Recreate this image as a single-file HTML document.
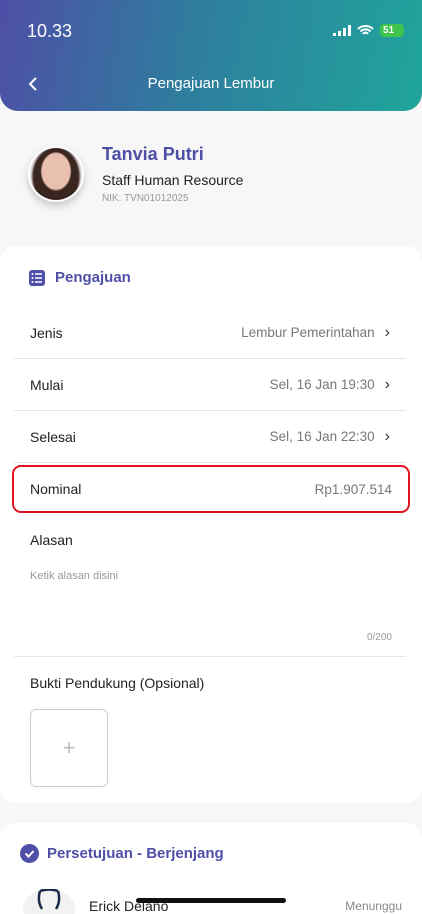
<!DOCTYPE html>
<html><head><meta charset="utf-8"><style>
*{margin:0;padding:0;box-sizing:border-box}
html,body{width:422px;height:914px;overflow:hidden}
body{background:#f7f7f7;font-family:"Liberation Sans",sans-serif;position:relative;color:#222}
.hdr{position:absolute;left:0;top:0;width:422px;height:111px;background:linear-gradient(100deg,#4e4fa6 0%,#2f7d9e 45%,#1fa59b 100%);border-radius:0 0 18px 18px}
.time{position:absolute;left:27px;top:21px;color:#fff;font-size:18px}
.title{position:absolute;left:0;width:422px;top:75px;text-align:center;color:#fff;font-size:15px}
.back{position:absolute;left:27px;top:76px}
.av{position:absolute;left:28px;top:146px;width:56px;height:56px;border-radius:50%;background:#ddd;border:2px solid #fff;box-shadow:0 4px 8px rgba(0,0,0,.2);overflow:hidden}
.name{position:absolute;left:102px;top:144px;font-size:18px;font-weight:bold;color:#4e4fa6}
.role{position:absolute;left:102px;top:172px;font-size:14px;color:#222}
.nik{position:absolute;left:102px;top:193px;font-size:10px;color:#999}
.card{position:absolute;left:0;width:422px;background:#fff;border-radius:16px}
.sec{position:absolute;font-size:15px;font-weight:bold;color:#4e4fa6}
.row{position:absolute;left:14px;width:392px;height:52px;border-bottom:1px solid #e5e5e5;font-size:14px;display:flex;align-items:center;padding:0 16px}
.row .v{margin-left:auto;color:#777;font-size:13.5px}
.ch{margin-left:10px;color:#333;font-size:16px}
</style></head><body>
<div class="hdr">
<div class="time">10.33</div>
<div style="position:absolute;right:18px;top:24px;display:flex;gap:6px;align-items:center">
<svg width="18" height="12"><g fill="#fff"><rect x="0" y="8" width="3" height="3"/><rect x="5" y="6" width="3" height="5"/><rect x="10" y="3" width="3" height="8"/><rect x="15" y="0" width="3" height="11"/></g></svg>
<svg width="17" height="12" viewBox="0 0 17 12"><path d="M1 4a11 11 0 0 1 15 0M3.5 6.5a7 7 0 0 1 10 0M6 9a3 3 0 0 1 5 0" stroke="#fff" stroke-width="2" fill="none"/></svg>
<div style="width:24px;height:13px;border-radius:4px;background:#3ec34c;color:#fff;font-size:10px;font-weight:bold;padding-left:3px;line-height:13px">51</div>
</div>
<svg class="back" width="12" height="16"><path d="M9 2L3 8l6 6" stroke="#fff" stroke-width="2" fill="none"/></svg>
<div class="title">Pengajuan Lembur</div>
</div>
<div class="av"><div style="width:100%;height:100%;background:radial-gradient(ellipse 30% 38% at 50% 45%,#e9bfae 0 90%,transparent 100%),radial-gradient(ellipse 48% 60% at 50% 55%,#3a2620 0 90%,transparent 100%),#dcdcdc"></div></div>
<div class="name">Tanvia Putri</div>
<div class="role">Staff Human Resource</div>
<div class="nik">NIK: TVN01012025</div>

<div class="card" style="top:246px;height:557px">
<svg style="position:absolute;left:29px;top:24px" width="16" height="16"><rect x="0" y="0" width="16" height="16" rx="3" fill="#4e4fa6"/><g stroke="#fff" stroke-width="1.4"><path d="M6 4h7M6 8h7M6 12h7"/></g><g fill="#fff"><circle cx="3.5" cy="4" r="1"/><circle cx="3.5" cy="8" r="1"/><circle cx="3.5" cy="12" r="1"/></g></svg>
<div class="sec" style="left:55px;top:23px">Pengajuan</div>
</div>
<div class="row" style="top:307px">Jenis<span class="v">Lembur Pemerintahan</span><span class="ch">›</span></div>
<div class="row" style="top:359px">Mulai<span class="v">Sel, 16 Jan 19:30</span><span class="ch">›</span></div>
<div class="row" style="top:411px">Selesai<span class="v">Sel, 16 Jan 22:30</span><span class="ch">›</span></div>
<div style="position:absolute;left:12px;top:465px;width:398px;height:48px;border:2px solid #e0141e;border-radius:9px;display:flex;align-items:center;padding:0 16px;font-size:14px">Nominal<span style="margin-left:auto;color:#777;font-size:13.5px">Rp1.907.514</span></div>
<div style="position:absolute;left:30px;top:532px;font-size:14px">Alasan</div>
<div style="position:absolute;left:30px;top:570px;font-size:11px;color:#999">Ketik alasan disini</div>
<div style="position:absolute;right:30px;top:632px;font-size:10px;color:#999">0/200</div>
<div style="position:absolute;left:14px;width:392px;top:656px;border-top:1px solid #e5e5e5"></div>
<div style="position:absolute;left:30px;top:675px;font-size:14px">Bukti Pendukung (Opsional)</div>
<div style="position:absolute;left:30px;top:709px;width:78px;height:78px;border:1px solid #ccc;border-radius:6px;text-align:center;line-height:76px;color:#bbb;font-size:22px">+</div>

<div class="card" style="top:823px;height:91px;border-radius:16px 16px 0 0">
<svg style="position:absolute;left:20px;top:21px" width="19" height="19"><circle cx="9.5" cy="9.5" r="9.5" fill="#4e4fa6"/><path d="M5.5 9.5l3 3 5-5.5" stroke="#fff" stroke-width="2" fill="none"/></svg>
<div class="sec" style="left:47px;top:22px">Persetujuan - Berjenjang</div>
<div style="position:absolute;left:23px;top:66px;width:52px;height:40px;border-radius:50%;background:#f2f2f2"></div>
<svg style="position:absolute;left:34px;top:66px" width="30" height="26"><path d="M6 2q9-3 18 0M6 2q-3 10 2 18M24 2q3 10-2 18" stroke="#1a2a4a" stroke-width="2.5" fill="none"/></svg>
<div style="position:absolute;left:89px;top:75px;font-size:14px">Erick Delano</div>
<div style="position:absolute;right:20px;top:76px;font-size:12px;color:#888">Menunggu</div>
</div>
<div style="position:absolute;left:136px;top:898px;width:150px;height:5px;border-radius:3px;background:#111"></div>
</body></html>
